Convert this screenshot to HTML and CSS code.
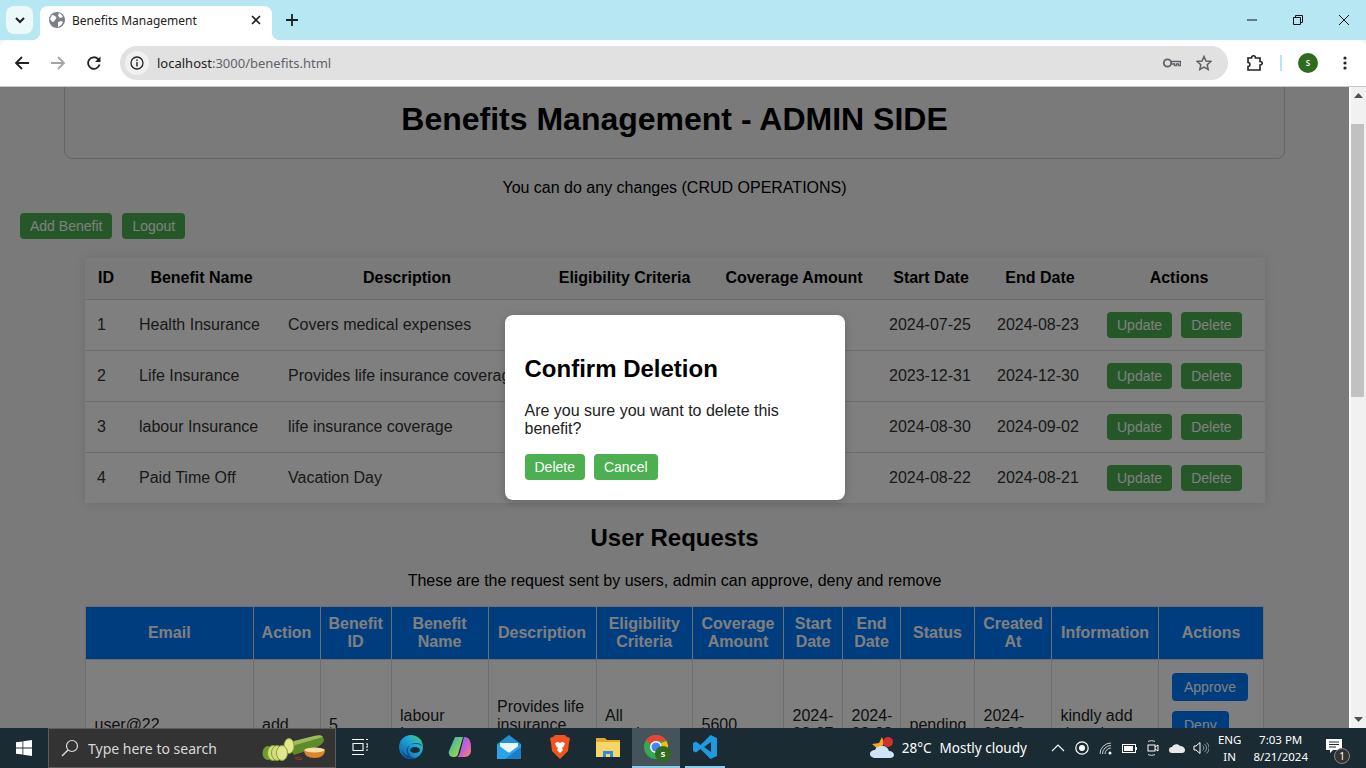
FILE: index.html
```html
<!DOCTYPE html>
<html>
<head>
  <title>Benefits Management</title>
  <link rel="stylesheet" href="styles.css">
</head>
<body>
  <div class="tabstrip">
    <div class="tab-search">
      <svg width="12" height="12" viewBox="0 0 12 12"><path d="M2 4l4 4 4-4" fill="none" stroke="#1f1f1f" stroke-width="2"/></svg>
    </div>
    <div class="tab">
      <svg width="16" height="16" viewBox="0 0 16 16"><circle cx="8" cy="8" r="8" fill="#7b8087"/><path d="M3 3c2 0 3 1 4 2s0 2-1 3-1 2-2 2-2-2-3-3zM10 1c2 1 3 2 4 4l-3 1-2-2zM9 10l3-1 2 1c-1 2-2 4-5 5z" fill="#fff"/></svg>
      <span class="tab-title">Benefits Management</span>
      <svg class="tab-close" width="10" height="10" viewBox="0 0 10 10"><path d="M1 1l8 8M9 1l-8 8" stroke="#1f1f1f" stroke-width="1.6"/></svg>
    </div>
    <svg class="new-tab" width="12" height="12" viewBox="0 0 12 12"><path d="M6 0v12M0 6h12" stroke="#1f1f1f" stroke-width="1.8"/></svg>
    <div class="window-btns">
      <svg width="10" height="10" viewBox="0 0 10 10"><path d="M0 5h10" stroke="#111" stroke-width="1"/></svg>
      <svg width="10" height="10" viewBox="0 0 10 10"><path d="M.5 2.500h7v7h-7zM2.500 2.500v-2h7v7h-2" fill="none" stroke="#111"/></svg>
      <svg width="10" height="10" viewBox="0 0 10 10"><path d="M0 0l10 10M10 0l-10 10" stroke="#111"/></svg>
    </div>
  </div>

  <div class="toolbar">
    <svg class="nav-icon" width="16" height="16" viewBox="0 0 16 16"><path d="M15 8H2M8 2L2 8l6 6" fill="none" stroke="#222" stroke-width="1.8"/></svg>
    <svg class="nav-icon" width="16" height="16" viewBox="0 0 16 16"><path d="M1 8h13M8 2l6 6-6 6" fill="none" stroke="#a3a3a3" stroke-width="1.8"/></svg>
    <svg class="nav-icon" width="16" height="16" viewBox="0 0 16 16"><path d="M13.500 9.500A5.800 5.800 0 1 1 12 4l1.500 1.500" fill="none" stroke="#222" stroke-width="1.800"/><path d="M14.500 1.500v5.500H9z" fill="#222"/></svg>
    <div class="omnibox">
      <div class="site-info">
        <svg width="14" height="14" viewBox="0 0 14 14"><circle cx="7" cy="7" r="6" fill="none" stroke="#222" stroke-width="1.300"/><path d="M7 6v4.500M7 3.500v1.400" stroke="#222" stroke-width="1.400"/></svg>
      </div>
      <span class="url"><span class="url-host">localhost</span>:3000/benefits.html</span>
      <svg class="key-icon" width="18" height="12" viewBox="0 0 18 12"><circle cx="4.500" cy="6" r="3.700" fill="none" stroke="#5f6368" stroke-width="1.800"/><path d="M8.500 4.500h9v4h-2V7h-2v1.500h-2V7h-3z" fill="none" stroke="#5f6368" stroke-width="1.300"/></svg>
      <svg class="star-icon" width="16" height="16" viewBox="0 0 16 16"><path d="M8 1.500l2 4.500 4.800.5-3.600 3.200 1 4.800L8 12.100l-4.200 2.400 1-4.800L1.200 6.500 6 6z" fill="none" stroke="#5f6368" stroke-width="1.500"/></svg>
    </div>
    <svg class="puzzle" width="16" height="16" viewBox="0 0 16 16"><path d="M1 3h3.500c0-3 4-3 4 0H13v3.500c3 0 3 3.500 0 3.500v5H1v-3.500c2.500 0 2.500-4 0-4z" fill="none" stroke="#222" stroke-width="1.600"/></svg>
    <div class="divider"></div>
    <div class="avatar">S</div>
    <svg class="kebab" width="4" height="14" viewBox="0 0 4 14"><circle cx="2" cy="2" r="1.600" fill="#222"/><circle cx="2" cy="7" r="1.600" fill="#222"/><circle cx="2" cy="12" r="1.600" fill="#222"/></svg>
  </div>

  <div class="viewport">
    <div class="content">
      <div class="page">
        <header class="title-box">
          <h1>Benefits Management - ADMIN SIDE</h1>
        </header>
        <p class="intro">You can do any changes (CRUD OPERATIONS)</p>
        <div class="top-actions">
          <button class="btn">Add Benefit</button>
          <button class="btn">Logout</button>
        </div>

        <table class="benefits">
          <colgroup>
            <col class="c-id"><col class="c-name"><col class="c-desc"><col class="c-elig">
            <col class="c-cov"><col class="c-start"><col class="c-end"><col class="c-act">
          </colgroup>
          <thead>
            <tr>
              <th>ID</th><th>Benefit Name</th><th>Description</th><th>Eligibility Criteria</th>
              <th>Coverage Amount</th><th>Start Date</th><th>End Date</th><th class="th-actions">Actions</th>
            </tr>
          </thead>
          <tbody>
            <tr>
              <td>1</td><td>Health Insurance</td><td>Covers medical expenses</td><td></td><td></td>
              <td>2024-07-25</td><td>2024-08-23</td>
              <td><div class="row-actions"><button class="btn">Update</button><button class="btn">Delete</button></div></td>
            </tr>
            <tr>
              <td>2</td><td>Life Insurance</td><td>Provides life insurance coverage</td><td></td><td></td>
              <td>2023-12-31</td><td>2024-12-30</td>
              <td><div class="row-actions"><button class="btn">Update</button><button class="btn">Delete</button></div></td>
            </tr>
            <tr>
              <td>3</td><td>labour Insurance</td><td>life insurance coverage</td><td></td><td></td>
              <td>2024-08-30</td><td>2024-09-02</td>
              <td><div class="row-actions"><button class="btn">Update</button><button class="btn">Delete</button></div></td>
            </tr>
            <tr>
              <td>4</td><td>Paid Time Off</td><td>Vacation Day</td><td></td><td></td>
              <td>2024-08-22</td><td>2024-08-21</td>
              <td><div class="row-actions"><button class="btn">Update</button><button class="btn">Delete</button></div></td>
            </tr>
          </tbody>
        </table>

        <h2 class="section-title">User Requests</h2>
        <p class="section-note">These are the request sent by users, admin can approve, deny and remove</p>

        <table class="requests">
          <colgroup>
            <col class="r-email"><col class="r-action"><col class="r-bid"><col class="r-bname"><col class="r-desc">
            <col class="r-elig"><col class="r-cov"><col class="r-start"><col class="r-end"><col class="r-status">
            <col class="r-created"><col class="r-info"><col class="r-act">
          </colgroup>
          <thead>
            <tr>
              <th>Email</th><th>Action</th><th>Benefit ID</th><th>Benefit Name</th><th>Description</th>
              <th>Eligibility Criteria</th><th>Coverage Amount</th><th>Start Date</th><th>End Date</th>
              <th>Status</th><th>Created At</th><th>Information</th><th>Actions</th>
            </tr>
          </thead>
          <tbody>
            <tr>
              <td>user@22</td><td>add</td><td>5</td><td>labour Insurance</td><td>Provides life insurance coverage</td>
              <td>All employees</td><td>5600</td><td>2024-08-27</td><td>2024-08-28</td><td>pending</td>
              <td>2024-08-20</td><td>kindly add dental</td>
              <td>
                <div class="request-actions">
                  <button class="btn-blue">Approve</button>
                  <button class="btn-blue">Deny</button>
                  <button class="btn-blue">Remove</button>
                </div>
              </td>
            </tr>
          </tbody>
        </table>
      </div>

      <div class="overlay">
        <div class="modal">
          <h2>Confirm Deletion</h2>
          <p>Are you sure you want to delete this benefit?</p>
          <div class="modal-actions">
            <button class="btn">Delete</button>
            <button class="btn">Cancel</button>
          </div>
        </div>
      </div>
    </div>

    <div class="scrollbar">
      <svg width="9" height="5" viewBox="0 0 9 5"><path d="M4.500 0L9 5H0z" fill="#505050"/></svg>
      <div class="track"><div class="thumb"></div></div>
      <svg width="9" height="5" viewBox="0 0 9 5"><path d="M0 0h9L4.500 5z" fill="#505050"/></svg>
    </div>
  </div>

  <div class="taskbar">
    <div class="start">
      <svg width="16" height="16" viewBox="0 0 16 16"><path d="M0 2.300l6.500-.9v6.200H0zM7.300 1.300L16 0v7.600H7.300zM0 8.400h6.500v6.200L0 13.700zM7.300 8.400H16V16l-8.700-1.300z" fill="#fff"/></svg>
    </div>
    <div class="search">
      <svg width="18" height="18" viewBox="0 0 18 18"><circle cx="11" cy="7" r="5.500" fill="none" stroke="#ddd" stroke-width="1.200"/><path d="M7 11l-6 6" stroke="#ddd" stroke-width="1.400"/></svg>
      <span class="search-text">Type here to search</span>
      <svg class="cucumber" width="68" height="30" viewBox="0 0 68 30">
        <path d="M24 10L50 4c6-2 12-1 12 3 0 4-6 7-12 9l-18 6z" fill="#5d8a2b"/>
        <path d="M28 9l24-6c4-1 8-1 9 1L30 13z" fill="#9dbb58"/>
        <ellipse cx="27" cy="13" rx="5" ry="7.500" fill="#e3e88f" stroke="#86a83a"/>
        <ellipse cx="6" cy="20" rx="5.500" ry="7" fill="#6f9a2f"/>
        <ellipse cx="11" cy="20" rx="5.500" ry="7.500" fill="#d4dd7a" stroke="#7ea132"/>
        <ellipse cx="15" cy="20" rx="5.500" ry="7.500" fill="#d4dd7a" stroke="#7ea132"/>
        <ellipse cx="20" cy="20" rx="5.500" ry="7.500" fill="#e2e78f" stroke="#7ea132"/>
        <path d="M42 17c0-2 21-2 21 0 0 5-4 8-10.500 8S42 22 42 17z" fill="#d9852c"/>
        <ellipse cx="52.500" cy="17" rx="10" ry="2.500" fill="#f6dfa6"/>
        <path d="M33 25l4-1 3 2-4 1z" fill="none" stroke="#a0342a" stroke-width="1"/>
      </svg>
    </div>
    <div class="slot">
      <svg width="16" height="16" viewBox="0 0 16 16"><path d="M0 .5h12M0 15.500h12M1 4.500h10v7H1zM14 .5h2M14 5h2v3h-2M14 11h2" fill="none" stroke="#fff" stroke-width="1.100"/></svg>
    </div>
    <div class="slot ml3">
      <svg width="24" height="24" viewBox="0 0 24 24"><defs><linearGradient id="edgeGrad" x1="0" y1="1" x2="1" y2="0"><stop offset="0" stop-color="#0c59a4"/><stop offset=".6" stop-color="#1ba7d8"/><stop offset="1" stop-color="#4fd26b"/></linearGradient></defs><circle cx="12" cy="12" r="12" fill="url(#edgeGrad)"/><path d="M24 13c0-3-3-5-7-5-5 0-8 3-8 7 0 4 3 8 8 8-7 3-14-2-14-9 1 4 4 6 6 6-4-6 1-12 7-11 5 0 8 2 8 4z" fill="#0d4d8f"/><ellipse cx="16" cy="15" rx="5" ry="3" fill="#1a2b33"/></svg>
    </div>
    <div class="slot ml1">
      <svg width="24" height="24" viewBox="0 0 24 24"><defs><linearGradient id="copA" x1="0" y1="0" x2="1" y2="1"><stop offset="0" stop-color="#2ea7e0"/><stop offset=".6" stop-color="#7bd05a"/><stop offset="1" stop-color="#f6d04a"/></linearGradient><linearGradient id="copB" x1="0" y1="0" x2="1" y2="1"><stop offset="0" stop-color="#7a6bf0"/><stop offset=".6" stop-color="#d05fd0"/><stop offset="1" stop-color="#f6914a"/></linearGradient></defs><path d="M7 2h8l-5 17c-1 3-3 3-5 3-3 0-5-3-4-6z" fill="url(#copA)"/><path d="M9 22h8c3 0 6-3 6-6 0-3 0-8-1-10-1-3-3-4-6-4l-3 12c-1 4-2 8-4 8z" fill="url(#copB)"/></svg>
    </div>
    <div class="slot ml1">
      <svg width="24" height="24" viewBox="0 0 24 24"><path d="M0 9L12 0l12 9v15H0z" fill="#1f8fd8"/><path d="M3 8h18v5l-9 5-9-5z" fill="#eaf6fd"/><path d="M0 9l12 9 12-9v15H0z" fill="#29a4e6"/><path d="M24 24H8l16-12z" fill="#1c7fc6"/></svg>
    </div>
    <div class="slot ml3">
      <svg width="20" height="24" viewBox="0 0 20 24"><path d="M5 0h10l2 2 3 1-1 5-1 8-8 8-8-8-1-8-1-5 3-1z" fill="#f1541e"/><path d="M5 8l3-1 2 1 2-1 3 1-1 3-2 2 1 2-3 3-3-3 1-2-2-2z" fill="#fff"/></svg>
    </div>
    <div class="slot">
      <svg width="24" height="20" viewBox="0 0 24 20"><path d="M0 1h9l2 2h13v17H0z" fill="#e6a92f"/><path d="M0 5h24v15H0z" fill="#f7d568"/><path d="M7 20v-6h10v6h-3v-3h-4v3z" fill="#2f8fd8"/></svg>
    </div>
    <div class="slot slot-active">
      <div class="chrome-icon">
        <svg width="24" height="24" viewBox="0 0 24 24"><circle cx="12" cy="12" r="12" fill="#34a853"/><path d="M12 0a12 12 0 0 1 10.400 6H12a6 6 0 0 0-5.400 3.400L2 5a12 12 0 0 1 10-5z" fill="#ea4335"/><path d="M22.400 6A12 12 0 0 1 12 24l5-8.500A6 6 0 0 0 17 8z" fill="#fbbc05"/><circle cx="12" cy="12" r="6" fill="#fff"/><circle cx="12" cy="12" r="4.500" fill="#4285f4"/></svg>
        <span class="chrome-badge">s</span>
      </div>
    </div>
    <div class="slot slot-open ml1">
      <svg width="24" height="24" viewBox="0 0 24 24"><path d="M17.500 0L7.500 10 3 6.500 0 8v8l3 1.500L7.500 14l10 10 6.500-3V3zM18 7v10l-7-5z" fill="#1f9ae0" fill-rule="evenodd"/></svg>
    </div>

    <div class="tray">
      <svg class="weather" width="26" height="24" viewBox="0 0 26 24"><path d="M2 8l7-1 3-6 2 6-4 8z" fill="#f5a623"/><circle cx="18" cy="6" r="5" fill="#d32f2f"/><path d="M6 22c-4 0-6-2-6-4 0-3 3-4 5-4 1-3 4-4 7-4 4 0 6 2 7 5 3 0 5 2 5 4 0 2-2 3-4 3z" fill="#cfe3f7"/></svg>
      <span class="temp">28°C</span>
      <span class="weather-text">Mostly cloudy</span>
      <svg class="tray-chevron" width="14" height="8" viewBox="0 0 14 8"><path d="M1 7l6-6 6 6" fill="none" stroke="#fff" stroke-width="1.200"/></svg>
      <svg class="tray-icon" width="14" height="14" viewBox="0 0 14 14"><circle cx="7" cy="7" r="6.200" fill="none" stroke="#fff" stroke-width="1.200"/><circle cx="7" cy="7" r="3" fill="#fff"/></svg>
      <svg class="tray-icon" width="13" height="13" viewBox="0 0 13 13"><path d="M1 12a11 11 0 0 1 11-11M3.500 12A8.500 8.500 0 0 1 12 3.500M6 12a6 6 0 0 1 6-6" fill="none" stroke="#ddd" stroke-width=".9"/><circle cx="11" cy="11" r="1.500" fill="#fff"/></svg>
      <svg class="tray-icon" width="15" height="9" viewBox="0 0 15 9"><rect x=".5" y=".5" width="13" height="8" fill="none" stroke="#fff"/><rect x="2" y="2" width="9" height="5" fill="#fff"/><rect x="14" y="3" width="1" height="3" fill="#fff"/></svg>
      <svg class="tray-icon" width="12" height="16" viewBox="0 0 12 16"><path d="M1 1.500c2-1 5-1 7 0M1 14.500c2 1 5 1 7 0" fill="none" stroke="#ddd"/><rect x="1" y="5" width="7" height="6" fill="none" stroke="#fff"/><path d="M8 7l3-2v6l-3-2" fill="none" stroke="#fff"/></svg>
      <svg class="tray-icon" width="16" height="10" viewBox="0 0 16 10"><path d="M3 10a3 3 0 0 1 0-6c1-3 6-4 8-1 3 0 5 2 5 4s-1 3-3 3z" fill="#e8e8e8"/></svg>
      <svg class="tray-icon tray-sound" width="16" height="14" viewBox="0 0 16 14"><path d="M1 5h2l4-3.500v11L3 9H1z" fill="none" stroke="#fff"/><path d="M9.500 4.500a3 3 0 0 1 0 5M11.500 3a5 5 0 0 1 0 8M13.500 1.500a7 7 0 0 1 0 11" fill="none" stroke="#8f9a9f"/></svg>
      <div class="lang"><span>ENG</span><span>IN</span></div>
      <div class="clock"><span>7:03 PM</span><span>8/21/2024</span></div>
      <div class="notify">
        <svg width="16" height="15" viewBox="0 0 16 15"><path d="M0 0h16v11H7l-3 3v-3H0z" fill="#fff"/><path d="M3 3h10M3 5.500h10M3 8h7" stroke="#1a2b33"/></svg>
        <span class="notify-count">1</span>
      </div>
    </div>
  </div>
</body>
</html>
```

FILE: styles.css
```css
* {
  box-sizing: border-box;
}

body {
  font-family: "Liberation Sans", Arial, sans-serif;
  background-color: #f4f4f4;
  margin: 0;
  height: 100vh;
  display: flex;
  flex-direction: column;
  overflow: hidden;
  color: #000;
}

/* browser chrome */
.tabstrip {
  height: 40px;
  flex: none;
  background-color: #b6e7f3;
  display: flex;
  align-items: flex-end;
  font-family: "Noto Sans", sans-serif;
}

.tab-search {
  width: 27px;
  height: 28px;
  margin: 0 7px 6px 6px;
  background-color: #edf8fb;
  border-radius: 8px;
  display: flex;
  align-items: center;
  justify-content: center;
}

.tab {
  position: relative;
  width: 232px;
  height: 34px;
  background-color: #fff;
  border-radius: 8px 8px 0 0;
  display: flex;
  align-items: center;
  padding: 0 10px 6px 9px;
}

.tab::before,
.tab::after {
  content: "";
  position: absolute;
  bottom: 0;
  width: 8px;
  height: 8px;
}

.tab::before {
  left: -8px;
  background: radial-gradient(circle at 0 0, #b6e7f3 8px, #fff 8.5px);
}

.tab::after {
  right: -8px;
  background: radial-gradient(circle at 100% 0, #b6e7f3 8px, #fff 8.5px);
}

.tab-title {
  font-size: 12px;
  color: #222;
  margin-left: 7px;
  flex: 1;
}

.tab-close {
  margin-right: 1px;
}

.new-tab {
  margin: 0 0 14px 14px;
}

.window-btns {
  margin-left: auto;
  display: flex;
  gap: 36px;
  padding: 0 17px 15px 0;
}

.toolbar {
  height: 47px;
  flex: none;
  background-color: #fff;
  border-radius: 8px 8px 0 0;
  border-bottom: 1px solid #c8c8c8;
  display: flex;
  align-items: center;
  padding: 0 0 1px 14px;
  font-family: "Noto Sans", sans-serif;
}

.nav-icon {
  margin-right: 20px;
}

.omnibox {
  width: 1108px;
  height: 34px;
  margin-left: -2px;
  background-color: #e1e1e1;
  border-radius: 17px;
  display: flex;
  align-items: center;
  padding: 0 16px 0 5px;
}

.site-info {
  width: 24px;
  height: 24px;
  background-color: #f1f1f1;
  border-radius: 50%;
  display: flex;
  align-items: center;
  justify-content: center;
}

.url {
  font-size: 13px;
  color: #5f6368;
  margin-left: 8px;
  flex: 1;
}

.url-host {
  color: #222;
}

.key-icon {
  margin-right: 15px;
}

.puzzle {
  margin-left: 19px;
}

.divider {
  width: 2px;
  height: 16px;
  background-color: #b6e7f3;
  margin-left: 17px;
}

.avatar {
  width: 20px;
  height: 20px;
  margin-left: 16px;
  border-radius: 50%;
  background-color: #2f6b1f;
  color: #fff;
  font-size: 8px;
  font-weight: 600;
  display: flex;
  align-items: center;
  justify-content: center;
}

.kebab {
  margin-left: 25px;
}

/* page area */
.viewport {
  flex: 1;
  min-height: 0;
  display: flex;
}

.content {
  position: relative;
  flex: 1;
  min-width: 0;
  overflow: hidden;
}

.page {
  margin-top: -8px;
}

.title-box {
  width: 1221px;
  margin-left: 64px;
  height: 80px;
  border: 1px solid #ccc;
  border-radius: 8px;
  text-align: center;
}

.title-box h1 {
  font-size: 32px;
  margin: 21px 0;
}

.intro {
  text-align: center;
  margin: 20px 0 16px;
  line-height: 18px;
}

.top-actions {
  display: flex;
  gap: 10px;
  padding-left: 20px;
  margin-bottom: 19px;
}

.btn {
  font-family: inherit;
  font-size: 14px;
  line-height: 16px;
  padding: 5px 10px;
  border: none;
  border-radius: 4px;
  background-color: #4caf50;
  color: #fff;
}

.benefits {
  width: 1180px;
  margin-left: 85px;
  table-layout: fixed;
  border-collapse: collapse;
  background-color: #fff;
  box-shadow: 0 0 10px rgba(0, 0, 0, 0.1);
}

.c-id { width: 42px; }
.c-name { width: 149px; }
.c-desc { width: 262px; }
.c-elig { width: 173px; }
.c-cov { width: 166px; }
.c-start { width: 108px; }
.c-end { width: 110px; }
.c-act { width: 170px; }

.benefits th,
.benefits td {
  padding: 0 12px;
  border-bottom: 1px solid #ddd;
  color: #333;
  white-space: nowrap;
}

.benefits th {
  height: 41px;
  background-color: #f4f4f4;
  color: #000;
}

.benefits .th-actions {
  padding: 0 14px 0 12px;
}

.benefits td {
  height: 51px;
  text-align: left;
}

.benefits tbody tr:last-child td {
  border-bottom: none;
}

.row-actions {
  display: flex;
  gap: 9px;
}

.section-title {
  font-size: 24px;
  line-height: 27px;
  text-align: center;
  margin: 21px 0;
}

.section-note {
  text-align: center;
  line-height: 18px;
  margin: 0 0 16px;
}

.requests {
  width: 1179px;
  margin-left: 85px;
  table-layout: fixed;
  border-collapse: collapse;
  background-color: #fff;
}

.r-email { width: 167.5px; }
.r-action { width: 67px; }
.r-bid { width: 71px; }
.r-bname { width: 97px; }
.r-desc { width: 108px; }
.r-elig { width: 96.5px; }
.r-cov { width: 91px; }
.r-start { width: 59px; }
.r-end { width: 58px; }
.r-status { width: 74px; }
.r-created { width: 77px; }
.r-info { width: 107px; }
.r-act { width: 105px; }

.requests th,
.requests td {
  border: 1px solid #ddd;
  padding: 0 6px 0 8.5px;
  line-height: 18px;
}

.requests th {
  height: 53px;
  padding: 0 8px 1px;
  background-color: #007bff;
  color: #fff;
}

.requests td {
  height: 130px;
  color: #222;
}

.request-actions {
  display: flex;
  flex-direction: column;
  align-items: flex-start;
  gap: 10px;
  margin-left: 4.5px;
}

.btn-blue {
  font-family: inherit;
  font-size: 14px;
  line-height: 16px;
  padding: 6px 12px;
  border: none;
  border-radius: 4px;
  background-color: #007bff;
  color: #fff;
}

/* dialog */
.overlay {
  position: absolute;
  inset: 0;
  background-color: rgba(0, 0, 0, 0.5);
  display: flex;
  align-items: center;
  justify-content: center;
}

.modal {
  width: 340px;
  padding: 20px;
  background-color: #fff;
  border-radius: 8px;
  box-shadow: 0 2px 10px rgba(0, 0, 0, 0.2);
}

.modal h2 {
  font-size: 24px;
  line-height: 27px;
  margin: 20px 0;
}

.modal p {
  margin: 0 0 16px;
  line-height: 18px;
  color: #222;
}

.modal-actions {
  display: flex;
  gap: 9px;
}

/* scrollbar */
.scrollbar {
  width: 17px;
  flex: none;
  background-color: #f1f1f1;
  border-left: 2px solid #fafafa;
  display: flex;
  flex-direction: column;
  align-items: center;
  padding: 6px 0;
}

.track {
  flex: 1;
  width: 100%;
  padding-top: 26px;
}

.thumb {
  width: 13px;
  height: 273px;
  background-color: #c1c1c1;
}

/* taskbar */
.taskbar {
  height: 40px;
  flex: none;
  background-color: #1a2b33;
  display: flex;
  font-family: "Noto Sans", sans-serif;
  color: #fff;
}

.start {
  width: 48px;
  display: flex;
  align-items: center;
  justify-content: center;
}

.search {
  width: 288px;
  background-color: #333;
  border: 1px solid #5c5c5c;
  display: flex;
  align-items: center;
  padding: 0 5px 0 12px;
}

.search-text {
  font-size: 14px;
  color: #d8d8d8;
  margin-left: 9px;
  flex: 1;
}

.slot {
  width: 48px;
  display: flex;
  align-items: center;
  justify-content: center;
  border-bottom: 2px solid transparent;
}

.ml1 { margin-left: 1px; }
.ml3 { margin-left: 3px; }

.slot-active {
  background-color: #45535a;
  border-bottom-color: #8ccbea;
}

.slot-open {
  border-bottom-color: #8ccbea;
  width: 40px;
  margin-left: 5px;
}

.chrome-icon {
  position: relative;
  width: 24px;
  height: 24px;
}

.chrome-badge {
  position: absolute;
  right: -3px;
  bottom: -3px;
  width: 16px;
  height: 16px;
  border-radius: 50%;
  background-color: #2f6b1f;
  font-size: 9px;
  font-weight: 700;
  text-align: center;
  line-height: 15px;
}

.tray {
  margin-left: auto;
  display: flex;
  align-items: center;
  font-size: 13.5px;
}

.temp {
  margin-left: 6px;
}

.weather-text {
  margin-left: 8px;
  margin-right: 24px;
}

.tray-icon {
  margin-left: 10px;
}

.tray-sound {
  margin-left: 8px;
}

.lang,
.clock {
  display: flex;
  flex-direction: column;
  align-items: center;
  font-size: 11.5px;
  line-height: 17px;
}

.lang {
  margin-left: 9px;
}

.clock {
  margin-left: 12px;
}

.notify {
  position: relative;
  width: 20px;
  margin: 0 20px 0 18px;
}

.notify-count {
  position: absolute;
  right: -4px;
  bottom: -6px;
  width: 16px;
  height: 16px;
  border-radius: 50%;
  background-color: #333;
  border: 1px solid #888;
  font-size: 10px;
  text-align: center;
  line-height: 14px;
}
```
